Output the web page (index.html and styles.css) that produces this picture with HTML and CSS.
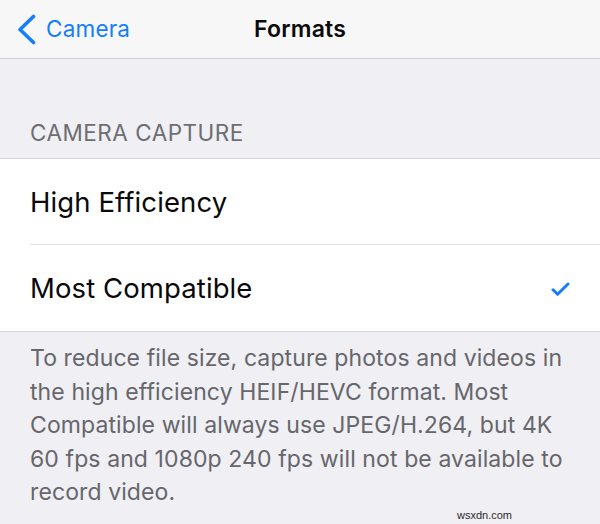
FILE: index.html
```html
<!DOCTYPE html>
<html lang="en">
<head>
<meta charset="utf-8">
<title>Formats</title>
<link rel="stylesheet" href="styles.css">
</head>
<body>
<div class="screen">
  <header class="nav">
    <div class="nav-back">
      <svg class="chevron" width="20" height="32" viewBox="0 0 20 32" aria-hidden="true">
        <path d="M16.5 2.5 L3 15.5 L16.5 28.5" fill="none" stroke="#147efb" stroke-width="3.6" stroke-linecap="round" stroke-linejoin="round"/>
      </svg>
      <span class="back-label">Camera</span>
    </div>
    <div class="nav-title">Formats</div>
    <div class="nav-spacer"></div>
  </header>

  <div class="section-header">CAMERA CAPTURE</div>

  <div class="group">
    <div class="row">
      <div class="row-inner">
        <span class="row-label">High Efficiency</span>
      </div>
    </div>
    <div class="row">
      <div class="row-inner">
        <span class="row-label">Most Compatible</span>
        <svg class="check" width="19" height="15" viewBox="0 0 19 15" aria-hidden="true">
          <path d="M2 7.8 L6.6 12.3 L17 2" fill="none" stroke="#147efb" stroke-width="3" stroke-linecap="round" stroke-linejoin="round"/>
        </svg>
      </div>
    </div>
  </div>

  <p class="section-footer">To reduce file size, capture photos and videos in the high efficiency HEIF/HEVC format. Most Compatible will always use JPEG/H.264, but 4K 60 fps and 1080p 240 fps will not be available to record video.</p>

  <div class="watermark">wsxdn.com</div>
</div>
</body>
</html>
```

FILE: styles.css
```css
* {
  box-sizing: border-box;
}

html, body {
  margin: 0;
  padding: 0;
}

body {
  width: 600px;
  height: 524px;
  overflow: hidden;
  background: #efeff4;
  font-family: Inter, "Liberation Sans", Arial, sans-serif;
  -webkit-font-smoothing: antialiased;
}

.screen {
  position: relative;
  width: 600px;
  height: 524px;
  background: #efeff4;
}

.nav {
  height: 59px;
  background: #f7f7f8;
  border-bottom: 1px solid #cfcfd3;
  display: grid;
  grid-template-columns: 1fr auto 1fr;
  align-items: center;
}

.nav-back {
  display: flex;
  align-items: center;
  padding-left: 17px;
  gap: 9px;
  color: #147efb;
}

.chevron {
  display: block;
  margin-top: 1px;
}

.back-label {
  font-size: 22.5px;
  letter-spacing: 0.2px;
  line-height: 28px;
}

.nav-title {
  font-size: 23px;
  font-weight: 600;
  color: #0a0a0a;
  line-height: 28px;
  letter-spacing: 0.2px;
}

.section-header {
  padding: 60px 0 11px 30px;
  font-size: 22.5px;
  line-height: 28px;
  color: #6d6d72;
  letter-spacing: 0.5px;
}

.group {
  background: #ffffff;
  border-top: 1px solid #d8d8dc;
  border-bottom: 1px solid #d8d8dc;
}

.row {
  padding-left: 30px;
}

.row-inner {
  height: 86px;
  display: flex;
  align-items: center;
  justify-content: space-between;
  padding-right: 30px;
  border-bottom: 1px solid #e2e2e6;
}

.row:last-child .row-inner {
  border-bottom: none;
}

.row-label {
  font-size: 27.5px;
  line-height: 34px;
  color: #0a0a0a;
  letter-spacing: 0.1px;
}

.check {
  display: block;
  margin-top: 2px;
}

.section-footer {
  margin: 0;
  padding: 10px 30px 0 30px;
  font-size: 23px;
  line-height: 33.5px;
  color: #66666b;
  letter-spacing: 0.1px;
}

.watermark {
  position: absolute;
  right: 88px;
  bottom: 3px;
  font-family: "Liberation Sans", Arial, sans-serif;
  font-size: 11px;
  line-height: 12px;
  color: #2a2a2a;
}
```
